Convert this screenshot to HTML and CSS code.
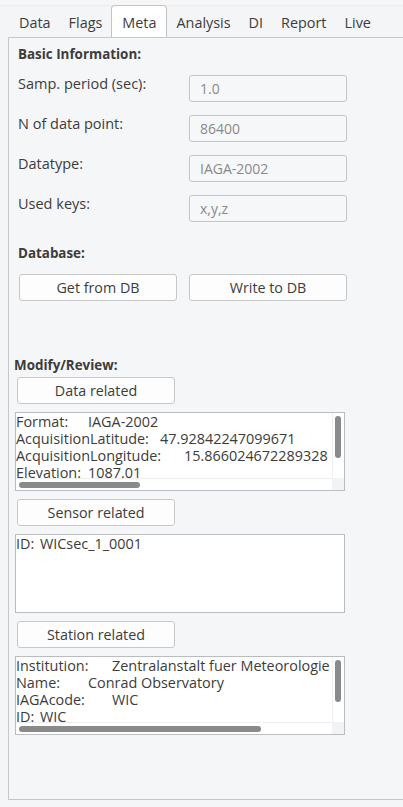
FILE: index.html
```html
<!DOCTYPE html>
<html>
<head>
<meta charset="utf-8">
<link rel="stylesheet" href="styles.css">
</head>
<body>
<div class="topline"></div>
<div class="tabs">
  <div class="tab">Data</div>
  <div class="tab">Flags</div>
  <div class="tab active">Meta</div>
  <div class="tab">Analysis</div>
  <div class="tab">DI</div>
  <div class="tab">Report</div>
  <div class="tab">Live</div>
</div>
<div class="pane">
  <div class="heading h-basic">Basic Information:</div>
  <div class="form">
    <div class="row"><div class="label">Samp. period (sec):</div><div class="field">1.0</div></div>
    <div class="row"><div class="label">N of data point:</div><div class="field">86400</div></div>
    <div class="row"><div class="label">Datatype:</div><div class="field">IAGA-2002</div></div>
    <div class="row"><div class="label">Used keys:</div><div class="field">x,y,z</div></div>
  </div>
  <div class="heading h-db">Database:</div>
  <div class="dbrow">
    <button class="btn">Get from DB</button>
    <button class="btn">Write to DB</button>
  </div>
  <div class="heading h-mod">Modify/Review:</div>
  <div class="review">
    <button class="btn btn-sec">Data related</button>
    <div class="tbox scroll">
      <div class="tcontent">
        <div class="line"><span class="k w72">Format:</span>IAGA-2002</div>
        <div class="line"><span class="k w144">AcquisitionLatitude:</span>47.92842247099671</div>
        <div class="line"><span class="k w168">AcquisitionLongitude:</span>15.866024672289328</div>
        <div class="line"><span class="k w72">Elevation:</span>1087.01</div>
      </div>
      <div class="vtrack"><div class="vthumb"></div></div>
      <div class="htrack"><div class="hthumb hthumb-short"></div></div>
      <div class="corner"></div>
    </div>
    <button class="btn btn-sec">Sensor related</button>
    <div class="tbox plain">
      <div class="tcontent">
        <div class="line"><span class="k w24">ID:</span>WICsec_1_0001</div>
      </div>
    </div>
    <button class="btn btn-sec">Station related</button>
    <div class="tbox scroll">
      <div class="tcontent">
        <div class="line"><span class="k w96">Institution:</span>Zentralanstalt fuer Meteorologie</div>
        <div class="line"><span class="k w72">Name:</span>Conrad Observatory</div>
        <div class="line"><span class="k w96">IAGAcode:</span>WIC</div>
        <div class="line"><span class="k w24">ID:</span>WIC</div>
      </div>
      <div class="vtrack"><div class="vthumb"></div></div>
      <div class="htrack"><div class="hthumb hthumb-long"></div></div>
      <div class="corner"></div>
    </div>
  </div>
</div>
</body>
</html>
```
FILE: styles.css
```css
* { box-sizing: border-box; }
html, body {
  margin: 0;
  padding: 0;
}
body {
  background: #f4f5f7;
  font-family: "Open Sans", "DejaVu Sans", sans-serif;
  font-size: 14px;
  color: #3c3c3c;
  width: 403px;
  height: 807px;
  overflow: hidden;
}
.topline {
  height: 6px;
  border-bottom: 1px solid #ededee;
  background: #f6f6f7;
}
.tabs {
  display: flex;
  padding-left: 10px;
  height: 32px;
  margin-top: -1px;
  font-size: 14.4px;
}
.tab {
  padding: 3px 9px 0;
  line-height: 29px;
  height: 32px;
  color: #3c3c3c;
}
.tab.active {
  background: #ffffff;
  border: 1px solid #c4c4c6;
  border-bottom: none;
  border-radius: 4px 4px 0 0;
  padding: 2px 10px 0;
  position: relative;
  z-index: 1;
}
.pane {
  margin-left: 8px;
  width: 400px;
  height: 763px;
  border: 1px solid #c6c7ca;
  background: #f5f6f8;
  padding-left: 9px;
}
.heading {
  font-weight: bold;
  line-height: 17px;
  font-size: 13.4px;
}
.h-basic { margin-top: 8px; }
.form {
  margin-top: 12px;
  display: flex;
  flex-direction: column;
  gap: 13px;
}
.row {
  display: flex;
  align-items: flex-start;
}
.label {
  width: 171px;
  line-height: 17px;
  font-size: 14.5px;
}
.field {
  width: 158px;
  height: 27px;
  border: 1px solid #c5c6c8;
  border-radius: 3px;
  background: #f6f7f8;
  color: #8a8a8a;
  padding-left: 10px;
  line-height: 25px;
}
.h-db { margin-top: 23px; }
.dbrow {
  margin-top: 12px;
  display: flex;
  gap: 12px;
  padding-left: 1px;
}
.btn {
  width: 158px;
  height: 27px;
  border: 1px solid #c7c8ca;
  border-radius: 3px;
  background: #fdfdfd;
  font-family: inherit;
  font-size: 14.3px;
  color: #3c3c3c;
  padding: 0;
  line-height: 25px;
}
.h-mod {
  margin-top: 56px;
  margin-left: -4px;
}
.review {
  margin-top: 3px;
  margin-left: -2px;
  display: flex;
  flex-direction: column;
  align-items: flex-start;
  gap: 8px;
}
.btn-sec {
  margin-left: 1px;
}
.tbox {
  width: 330px;
  height: 79px;
  border: 1px solid #b9bcc1;
  background: #ffffff;
  margin-left: -1px;
}
.tbox.scroll {
  display: grid;
  grid-template-columns: 1fr 12px;
  grid-template-rows: 65px 12px;
}
.tcontent {
  overflow: hidden;
  white-space: nowrap;
  line-height: 17px;
  font-size: 14.4px;
}
.plain .tcontent { height: 100%; }
.line { white-space: nowrap; }
.k { display: inline-block; }
.w24 { width: 24px; }
.w72 { width: 72px; }
.w96 { width: 96px; }
.w144 { width: 144px; }
.w168 { width: 168px; }
.vtrack {
  border-left: 1px solid #efeff0;
  background: #ffffff;
  padding: 3px 0 0 2px;
}
.vthumb {
  width: 6px;
  height: 42px;
  border-radius: 3px;
  background: #8a8a8a;
}
.htrack {
  border-top: 1px solid #efeff0;
  background: #ffffff;
  padding: 3px 0 0 3px;
}
.hthumb {
  height: 6px;
  border-radius: 3px;
  background: #8a8a8a;
}
.hthumb-short { width: 121px; }
.hthumb-long { width: 242px; }
.corner {
  background: #f2f3f4;
}
```
